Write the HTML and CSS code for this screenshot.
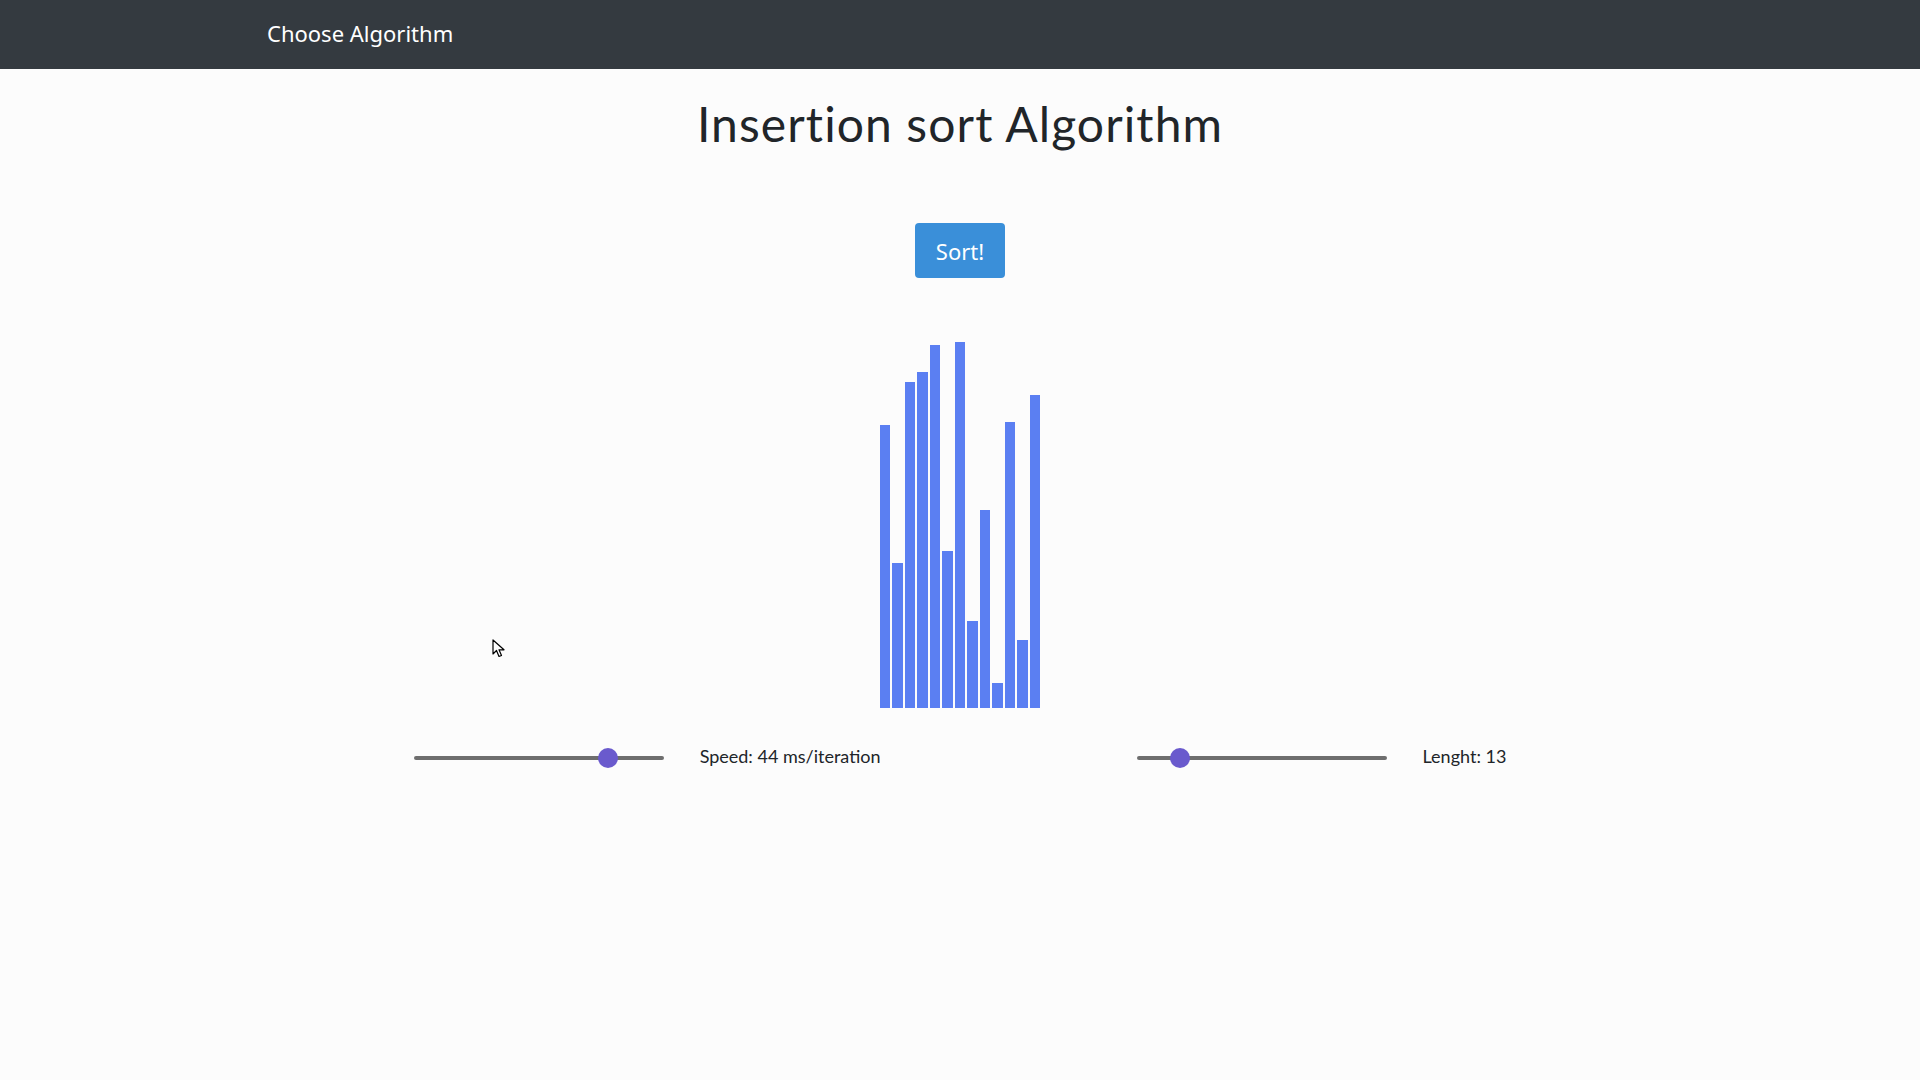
FILE: index.html
```html
<!DOCTYPE html>
<html lang="en">
<head>
<meta charset="utf-8">
<title>Insertion sort Algorithm</title>
<link rel="stylesheet" href="styles.css">
</head>
<body>
<nav class="navbar">
  <a class="brand" href="#">Choose Algorithm</a>
</nav>
<main class="main">
  <h1 class="title">Insertion sort Algorithm</h1>
  <button class="sort-btn" type="button">Sort!</button>
  <div class="bars">
    <div class="bar" style="height:283px"></div>
    <div class="bar" style="height:145px"></div>
    <div class="bar" style="height:326px"></div>
    <div class="bar" style="height:336px"></div>
    <div class="bar" style="height:363px"></div>
    <div class="bar" style="height:157px"></div>
    <div class="bar" style="height:366px"></div>
    <div class="bar" style="height:87px"></div>
    <div class="bar" style="height:198px"></div>
    <div class="bar" style="height:25px"></div>
    <div class="bar" style="height:286px"></div>
    <div class="bar" style="height:68px"></div>
    <div class="bar" style="height:313px"></div>
  </div>
  <div class="controls">
    <div class="control control-speed">
      <input class="slider" type="range" min="0" max="100" value="80">
      <span class="label">Speed: 44 ms/iteration</span>
    </div>
    <div class="control control-length">
      <input class="slider" type="range" min="5" max="60" value="13">
      <span class="label">Lenght: 13</span>
    </div>
  </div>
</main>
<svg class="cursor" width="14" height="20" viewBox="0 0 14 20">
  <path d="M1 1 L1 15 L4.5 11.5 L7 17.5 L9.5 16.5 L7 10.8 L12 10.8 Z" fill="#fff" stroke="#000" stroke-width="1.2" stroke-linejoin="round"/>
</svg>
</body>
</html>
```
FILE: styles.css
```css
* { box-sizing: border-box; }

html, body {
  margin: 0;
  padding: 0;
}

body {
  background: #fcfcfc;
  color: #212529;
  font-family: "Lato", "Noto Sans", sans-serif;
  min-height: 1080px;
  position: relative;
}

.navbar {
  height: 69px;
  background: #343a40;
  display: flex;
  align-items: center;
  padding-left: 267px;
}

.brand {
  color: #fff;
  text-decoration: none;
  font-family: "Noto Sans", sans-serif;
  font-size: 22px;
  line-height: 1;
  margin-top: -3px;
}

.main {
  display: flex;
  flex-direction: column;
  align-items: center;
}

.title {
  margin: 27px 0 0;
  font-family: "Lato", sans-serif;
  font-weight: 400;
  font-size: 48px;
  line-height: 56px;
  color: #212529;
  letter-spacing: 1.1px;
}

.sort-btn {
  margin-top: 71px;
  width: 90px;
  height: 55px;
  border: none;
  border-radius: 4px;
  background: #3a8fd9;
  color: #fff;
  font-family: "Noto Sans", sans-serif;
  font-size: 22px;
  padding: 0;
  cursor: pointer;
}

.bars {
  margin-top: 64px;
  height: 366px;
  display: flex;
  align-items: flex-end;
}

.bar {
  width: 10.5px;
  margin: 0 1px;
  background: #5b7ff2;
}

.controls {
  margin-top: 40px;
  display: flex;
  justify-content: center;
  gap: 256px;
}

.control {
  display: flex;
  align-items: center;
  gap: 36px;
}

.label {
  font-family: "Lato", sans-serif;
  font-size: 18px;
  color: #212529;
  line-height: 24px;
  margin-top: -5px;
}

.slider {
  -webkit-appearance: none;
  appearance: none;
  width: 250px;
  height: 20px;
  margin: 0;
  background: transparent;
}

.slider::-webkit-slider-runnable-track {
  height: 4px;
  background: #6e6e6e;
  border-radius: 2px;
}

.slider::-webkit-slider-thumb {
  -webkit-appearance: none;
  appearance: none;
  width: 20px;
  height: 20px;
  border-radius: 50%;
  background: #6a5acd;
  border: none;
  margin-top: -8px;
}

.cursor {
  position: absolute;
  left: 492px;
  top: 639px;
}
```
